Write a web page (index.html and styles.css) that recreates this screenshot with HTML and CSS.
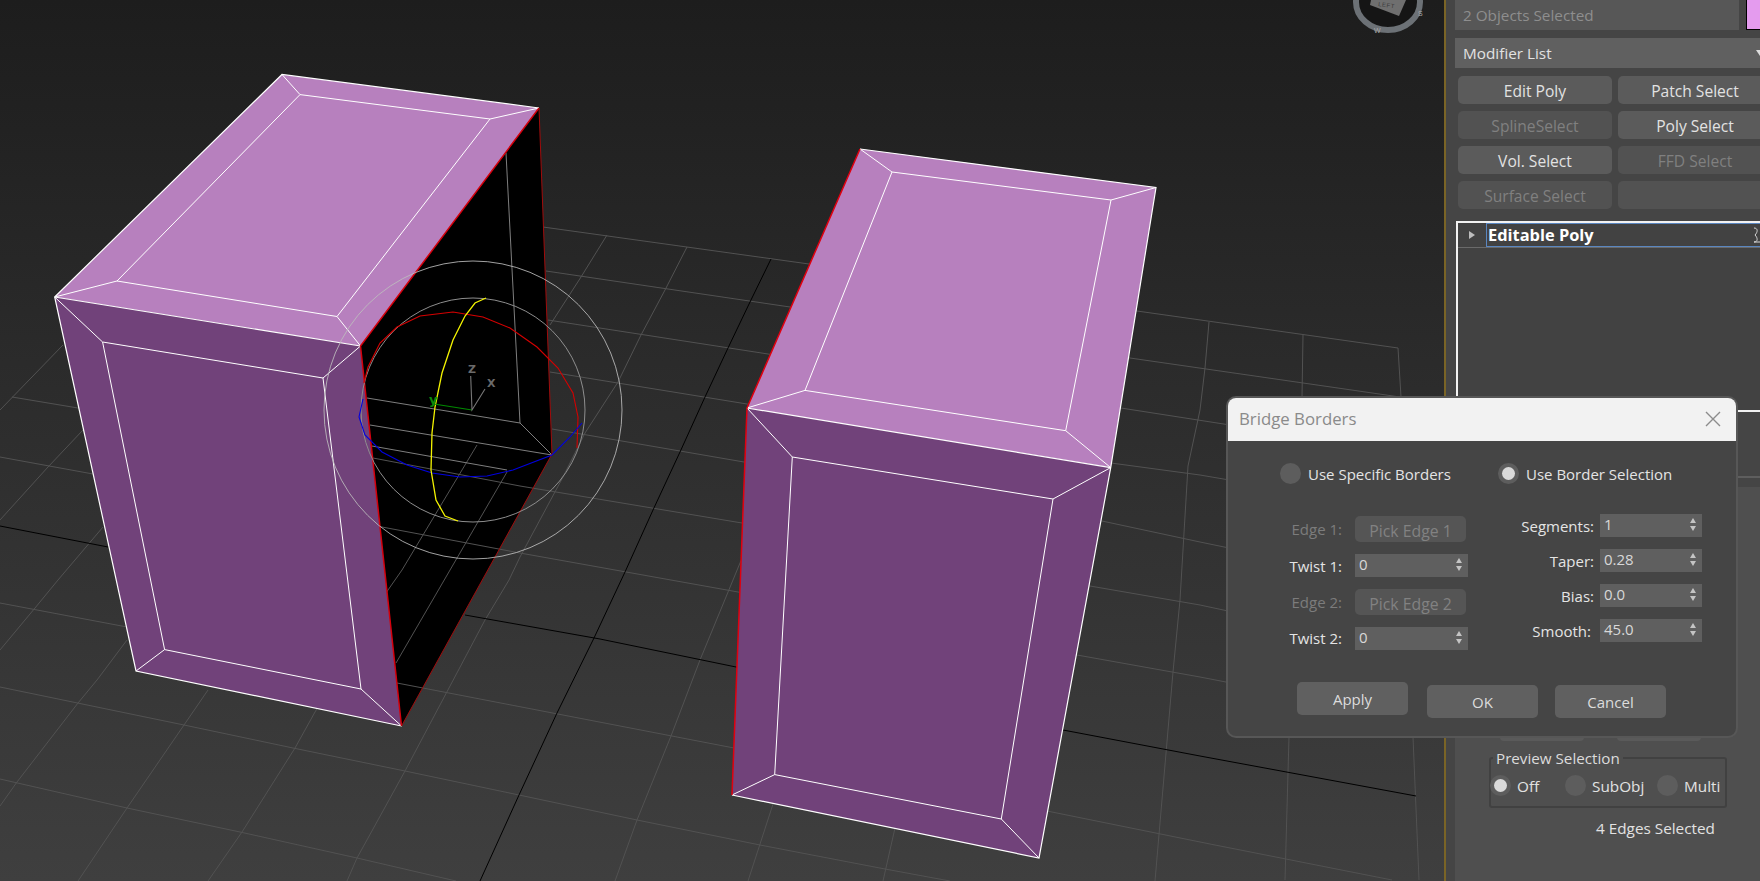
FILE: index.html
```html
<!DOCTYPE html>
<html lang="en">
<head>
<meta charset="utf-8">
<title>Bridge Borders</title>
<link rel="stylesheet" href="styles.css">
</head>
<body>
<div class="app">
  <main class="viewport">
    <svg class="scene" width="1444" height="881" viewBox="0 0 1444 881">
      <defs>
        <linearGradient id="bg" x1="0" y1="0" x2="0" y2="1">
          <stop offset="0" stop-color="#1d1d1d"/>
          <stop offset="1" stop-color="#3f3f3f"/>
        </linearGradient>
      </defs>
      <rect width="1444" height="881" fill="url(#bg)"/>

      <!-- view cube -->
      <ellipse class="vc-well" cx="1388" cy="2" rx="32" ry="28"/>
      <ellipse class="vc-ring" cx="1388" cy="2" rx="32" ry="28"/>
      <polygon class="vc-face" points="1371,0 1370,5 1399,16 1406,0"/>
      <text class="vc-label" x="1378" y="6" transform="rotate(8 1378 6)">LEFT</text>
      <text class="vc-mark" x="1418" y="16">S</text>
      <text class="vc-mark" x="1374" y="33">W</text>

      <!-- far side of the left box -->
      <polygon class="hole" points="539,108 552,454 401.5,726 360.5,346"/>

      <!-- grid -->
      <g class="grid">
        <polyline points="543,227 809,264 1137,311 1398,348"/>
        <polyline points="546,271 790,307 1130,358 1400,397"/>
        <polyline points="548,320 768,354 1121,408 1230,425 1405,453"/>
        <polyline points="550,372 747,404 1111,463 1200,475 1405,510"/>
        <polyline points="552,429 744,462 1102,521 1200,542 1408,585"/>
        <polyline points="12,397 78,408 373,458 520,486 742,523 1090,586 1200,605 1410,650"/>
        <polyline points="0,457 93,474 382,527 520,553 738,592 1077,655 1200,677 1412,718"/>
        <polyline points="0,603 127,627 397,683 734,748 1047,811 1210,844 1392,880"/>
        <polyline points="0,687 184,725 293,748 405,771 519,795 637,820 760,845 885,869 950,881"/>
        <polyline points="0,779 127,808 240,832 357,858 456,881"/>
        <polyline points="1398,348 1401,397 1405,500 1413,737 1419,880"/>
        <polyline points="1303,335 1302,397 1295,600 1289,737 1285,880"/>
        <polyline points="1209,322 1205,368 1200,410 1188,466 1180,600 1173,672 1155,881"/>
        <polyline points="905,800 895,828 883,881"/>
        <polyline points="800,740 774,801 748,881"/>
        <polyline points="760,520 740,563 700,660 671,736 637,820 615,881"/>
        <polyline points="687,247 665,290 641,335 618,382 585,433 563,477 520,557 509,580 485,620 405,771 357,858 347,881"/>
        <polyline points="607,235 581,277 550,325"/>
        <polyline points="477,445 402,570 388,590 315,712 295,748 242,832 208,881"/>
        <polyline points="507,472 396,663"/>
        <polyline points="208,690 184,725 127,808 78,881"/>
        <polyline points="127,640 97,680 78,703 17,782 0,806"/>
        <polyline points="103,527 58,580 35,608 0,650"/>
        <polyline points="83,430 48,467 0,520"/>
        <polyline points="63,345 0,410"/>
      </g>
      <g class="axis">
        <polyline points="771,259 750,302 728,348 705,397 680,452 653,510 625,572 594,638 557,713 519,795 480,881"/>
        <polyline points="0,526 108,547"/>
        <polyline points="465,615 600,639 736,667 1063,730 1200,756 1416,796"/>
      </g>

      <!-- wires seen through the hollow box -->
      <g class="inner">
        <polyline points="506,153 520,423 552,455"/>
        <polyline points="367,398 520,423"/>
        <polyline points="370,425 552,455"/>
        <polyline points="372,446 507,470"/>
      </g>

      <!-- left box -->
      <polygon class="top" points="282,74.5 539,108 360.5,346 54.7,297"/>
      <polygon class="front" points="54.7,297 360.5,346 401.5,726 136,671"/>
      <g class="wire">
        <polyline points="54.7,297 282,74.5 539,108"/>
        <polyline points="54.7,297 360.5,346"/>
        <polyline points="54.7,297 136,671 401.5,726"/>
      </g>
      <g class="wire thin">
        <polygon points="300,94.6 490,119 337,316.5 117,281"/>
        <line x1="282" y1="74.5" x2="300" y2="94.6"/>
        <line x1="539" y1="108" x2="490" y2="119"/>
        <line x1="360.5" y1="346" x2="337" y2="316.5"/>
        <line x1="54.7" y1="297" x2="117" y2="281"/>
        <polygon points="102.6,342 323,378 361,689 164.6,649.6"/>
        <line x1="54.7" y1="297" x2="102.6" y2="342"/>
        <line x1="360.5" y1="346" x2="323" y2="378"/>
        <line x1="401.5" y1="726" x2="361" y2="689"/>
        <line x1="136" y1="671" x2="164.6" y2="649.6"/>
      </g>
      <g class="border">
        <polyline points="539,108 360.5,346 401.5,726"/>
      </g>
      <polyline class="border dim" points="539,108 552,454 401.5,726"/>

      <!-- right box -->
      <polygon class="top" points="860,149 1156,187.5 1110.7,467.6 747,408"/>
      <polygon class="front" points="747,408 1110.7,467.6 1039,858 732,795"/>
      <g class="wire">
        <polyline points="860,149 1156,187.5 1110.7,467.6 1039,858 732,795"/>
        <polyline points="747,408 1110.7,467.6"/>
      </g>
      <g class="wire thin">
        <polygon points="892,172 1111,200 1065.7,430.7 805,390.4"/>
        <line x1="860" y1="149" x2="892" y2="172"/>
        <line x1="1156" y1="187.5" x2="1111" y2="200"/>
        <line x1="1110.7" y1="467.6" x2="1065.7" y2="430.7"/>
        <line x1="747" y1="408" x2="805" y2="390.4"/>
        <polygon points="792.3,457 1053,499 1001.3,819 774.7,774.6"/>
        <line x1="747" y1="408" x2="792.3" y2="457"/>
        <line x1="1110.7" y1="467.6" x2="1053" y2="499"/>
        <line x1="1039" y1="858" x2="1001.3" y2="819"/>
        <line x1="732" y1="795" x2="774.7" y2="774.6"/>
      </g>
      <polyline class="border" points="860,149 747,408 732,795"/>

      <!-- rotate gizmo -->
      <circle class="giz-outer" cx="473" cy="410" r="149"/>
      <circle class="giz-inner" cx="473" cy="410" r="112"/>
      <polyline class="giz red" points="364,383 368,367 380,343 397,327 420,316 453,312 483,317 510,328 537,347 558,368 573,393 578,417 577,448"/>
      <polyline class="giz blue" points="363,399 359,417 365,435 382,452 407,465 432,473 460,477 487,476 513,470 552,455 570,437 582,423"/>
      <polyline class="giz yellow" points="486,298 475,303 465,316 453,340 442,373 435,407 432,433 431,470 436,500 445,516 458,521"/>
      <line class="giz green" x1="434" y1="404" x2="472" y2="410"/>
      <polyline class="giz gray" points="470.7,376 472,410 485,389"/>
      <text class="giz-y" x="429" y="404">y</text>
      <text class="giz-l" x="468" y="373">Z</text>
      <text class="giz-l" x="487" y="387">X</text>
    </svg>
  </main>

  <aside class="panel">
    <div class="name-row">
      <div class="name-field">2 Objects Selected</div>
      <div class="swatch"></div>
    </div>
    <div class="mod-list"><span>Modifier List</span><span class="caret"></span></div>
    <div class="mod-buttons">
      <button class="pbtn">Edit Poly</button>
      <button class="pbtn">Patch Select</button>
      <button class="pbtn off">SplineSelect</button>
      <button class="pbtn">Poly Select</button>
      <button class="pbtn">Vol. Select</button>
      <button class="pbtn off">FFD Select</button>
      <button class="pbtn off">Surface Select</button>
      <button class="pbtn off"></button>
    </div>
    <div class="stack">
      <div class="stack-row">
        <span class="expander"></span>
        <span class="stack-name">Editable Poly</span>
        <svg class="pin" width="8" height="16" viewBox="0 0 8 16"><path d="M1 1c4 0 4 4 1 7c3 3 3 7-1 7h7"/></svg>
      </div>
    </div>
    <div class="stack-tools"></div>
    <section class="rollout">
      <div class="grip"></div>
      <div class="hidden-row">
        <button class="hbtn"></button>
        <button class="hbtn"></button>
      </div>
      <fieldset class="preview">
        <legend>Preview Selection</legend>
        <label class="popt opt-off"><span class="radio on"></span>Off</label>
        <label class="popt opt-sub"><span class="radio"></span>SubObj</label>
        <label class="popt"><span class="radio"></span>Multi</label>
      </fieldset>
      <div class="sel-count">4 Edges Selected</div>
    </section>
  </aside>

  <div class="dialog">
    <header class="dlg-title">
      <span>Bridge Borders</span>
      <svg class="dlg-close" width="16" height="16" viewBox="0 0 16 16"><path d="M1 1l14 14M15 1L1 15"/></svg>
    </header>
    <div class="dlg-body">
      <div class="mode-row">
        <label class="mode"><span class="radio"></span>Use Specific Borders</label>
        <label class="mode"><span class="radio on"></span>Use Border Selection</label>
      </div>
      <div class="form">
        <div class="col-left">
          <span class="lbl off">Edge 1:</span><button class="pick">Pick Edge 1</button>
          <span class="lbl">Twist 1:</span><div class="spinner wide">0<span class="spin"></span></div>
          <span class="lbl off">Edge 2:</span><button class="pick">Pick Edge 2</button>
          <span class="lbl nudge">Twist 2:</span><div class="spinner wide nudge">0<span class="spin"></span></div>
        </div>
        <div class="col-right">
          <span class="lbl">Segments:</span><div class="spinner">1<span class="spin"></span></div>
          <span class="lbl">Taper:</span><div class="spinner">0.28<span class="spin"></span></div>
          <span class="lbl">Bias:</span><div class="spinner">0.0<span class="spin"></span></div>
          <span class="lbl smooth">Smooth:</span><div class="spinner">45.0<span class="spin"></span></div>
        </div>
      </div>
      <div class="actions">
        <button class="act">Apply</button>
        <button class="act low ok">OK</button>
        <button class="act low">Cancel</button>
      </div>
    </div>
  </div>
</div>
</body>
</html>
```
FILE: styles.css
```css
* { box-sizing: border-box; }
html, body { margin: 0; height: 881px; overflow: hidden; background: #444; }
body, button { font-family: "Open Sans", "Noto Sans", sans-serif; font-size: 15px; }
button { border: 0; padding: 0; }

.app { position: relative; display: flex; width: 1760px; height: 881px; overflow: hidden; }
.viewport { flex: 0 0 1444px; height: 881px; }
.scene { display: block; }

/* scene */
.grid polyline { fill: none; stroke: #525252; stroke-width: 1; }
.axis polyline { fill: none; stroke: #000; stroke-width: 1; }
.inner polyline { fill: none; stroke: #7e7e7e; stroke-width: 1; }
.hole { fill: #000; }
.top { fill: #b780be; }
.front { fill: #71427a; }
.wire polyline, .wire polygon, .wire line { fill: none; stroke: #fff; stroke-width: 1.2; }
.wire.thin polyline, .wire.thin polygon, .wire.thin line { stroke-width: 1; }
.border { fill: none; stroke: #e0000f; stroke-width: 1.5; }
.border polyline { fill: none; stroke: #d4000c; stroke-width: 1.5; }
.border.dim { stroke: #a00c0c; stroke-width: 1; }
.giz-outer { fill: none; stroke: #bdbdbd; stroke-width: 1; opacity: .85; }
.giz-inner { fill: none; stroke: #8e8e8e; stroke-width: 1; }
.giz { fill: none; stroke-width: 1.1; }
.red { stroke: #d50000; }
.blue { stroke: #0000e0; }
.yellow { stroke: #f4f400; stroke-width: 1.3; }
.green { stroke: #008a00; }
.gray { stroke: #777; }
.giz-y { fill: #0b8a0b; font: bold 13px "DejaVu Sans", sans-serif; }
.giz-l { fill: #6a6a6a; font: bold 11px "DejaVu Sans", sans-serif; }
.vc-well { fill: #151515; }
.vc-ring { fill: none; stroke: #6c7176; stroke-width: 6; }
.vc-face { fill: #6f6f6f; }
.vc-label { fill: #3a3a3a; font: 6px "Liberation Sans", sans-serif; letter-spacing: .5px; }
.vc-mark { fill: #a8a8a8; font: 7px "Liberation Sans", sans-serif; }

/* command panel */
.panel { flex: 0 0 316px; height: 881px; background: #454545; border-left: 2px solid #7a6426; padding-left: 9px; overflow: hidden; color: #e2e2e2; }
.name-row { display: flex; height: 30px; gap: 7px; }
.name-field { flex: none; width: 284px; height: 30px; background: #575757; color: #8e8e8e; padding: 0 0 0 8px; line-height: 30px; font-size: 15.3px; }
.swatch { flex: none; width: 14px; height: 30px; background: #e49bee; border: 1px solid #000; border-top: 0; border-right: 0; }
.mod-list { display: flex; justify-content: space-between; align-items: center; width: 305px; height: 30px; margin-top: 8px; background: #606060; padding: 0 0 0 8px; font-size: 15.3px; }
.caret { width: 0; height: 0; border: 4px solid transparent; border-top: 6px solid #ddd; border-bottom: 0; margin-right: -4px; }
.mod-buttons { display: grid; grid-template-columns: 154px 154px; grid-auto-rows: 28px; column-gap: 6px; row-gap: 7px; margin: 8px 0 0 3px; }
.pbtn { background: #5b5b5b; border-radius: 5px; color: #e2e2e2; font-size: 15.6px; padding-top: 2px; }
.pbtn.off { background: #525252; color: #808080; }
.stack { width: 330px; height: 191px; margin: 12px 0 0 1px; border: 2px solid #f2f2f2; border-right: 0; background: #424242; }
.stack-row { position: relative; display: flex; align-items: center; height: 25px; border-bottom: 1px solid #6a6a6a; }
.expander { width: 0; height: 0; margin-left: 11px; border: 4px solid transparent; border-left: 6px solid #bdbdbd; border-right: 0; }
.stack-name { display: block; margin-left: 11px; width: 290px; height: 24px; padding-left: 1px; line-height: 22px; border: 1px solid #5a86c0; border-right: 0; font-weight: 700; font-size: 16.4px; color: #fff; }
.pin { position: absolute; left: 295px; top: 4px; fill: none; stroke: #d8d8d8; stroke-width: 1; }
.stack-tools { width: 330px; height: 66px; margin-left: 1px; border-bottom: 2px solid #5e5e5e; }
.rollout { position: relative; width: 320px; height: 403px; margin-top: 9px; background: #4f4f4f; border-radius: 3px; overflow: hidden; }
.grip { position: absolute; left: 287px; top: 10px; width: 10px; height: 10px; background-image: radial-gradient(#8a8a8a 40%, transparent 45%); background-size: 2px 2px; }
.hidden-row { display: flex; gap: 33px; margin: 226px 0 0 45px; }
.hbtn { width: 84px; height: 28px; background: #5a5a5a; border-radius: 4px; }
.preview { position: relative; width: 238px; height: 59px; margin: 8px 0 0 34px; padding: 0 0 2px; border: 2px solid #414141; border-radius: 3px; display: flex; align-items: center; }
.preview legend { margin-left: 2px; padding: 0 3px; font-size: 15.2px; line-height: 18px; color: #dcdcdc; }
.popt { display: flex; align-items: center; gap: 6px; font-size: 15.3px; }
.opt-off { margin-left: -1px; width: 75px; }
.opt-sub { width: 92px; }
.sel-count { margin: 10px 0 0 141px; font-size: 15.3px; line-height: 20px; }

.radio { position: relative; display: inline-block; flex: none; width: 21px; height: 21px; border-radius: 50%; background: #5d5d5d; }
.radio.on::after { content: ""; position: absolute; left: 4px; top: 4px; width: 13px; height: 13px; border-radius: 50%; background: #d9d9d9; }

/* dialog */
.dialog { position: absolute; left: 1226px; top: 396px; width: 512px; height: 342px; border: 2px solid #575757; border-radius: 10px; background: #454545; overflow: hidden; color: #e4e4e4; }
.dlg-title { display: flex; align-items: center; justify-content: space-between; height: 43px; padding: 0 15px 2px 11px; background: #f2f2f2; color: #8a8a8a; font-size: 16.8px; }
.dlg-close { fill: none; stroke: #8c8c8c; stroke-width: 1.4; }
.mode-row { display: grid; grid-template-columns: 218px 200px; margin: 22px 0 0 52px; }
.mode { display: flex; align-items: center; gap: 7px; height: 21px; }
.form { display: flex; gap: 26px; margin: 30px 0 0 40px; }
.col-left { display: grid; grid-template-columns: 74px 113px; grid-template-rows: 26px 23px 26px 23px; column-gap: 13px; row-gap: 12px; margin-top: 2px; align-items: center; }
.col-right { display: grid; grid-template-columns: 100px 102px; grid-auto-rows: 23px; column-gap: 6px; row-gap: 12px; align-items: center; }
.lbl { text-align: right; white-space: nowrap; }
.lbl.off { color: #7c7c7c; }
.lbl.smooth { padding-right: 3px; }
.nudge { margin-top: -1px; }
.pick { width: 111px; height: 26px; background: #555; border-radius: 5px; color: #828282; font-size: 15.8px; padding-top: 3px; }
.spinner { position: relative; height: 23px; background: #5f5f5f; color: #d8d8d8; padding-left: 4px; line-height: 21px; }
.spin { position: absolute; right: 6px; top: 4px; display: flex; flex-direction: column; gap: 3px; }
.spin::before, .spin::after { content: ""; width: 0; height: 0; border: 3.5px solid transparent; }
.spin::before { border-bottom: 5px solid #c4c4c4; border-top: 0; }
.spin::after { border-top: 5px solid #c4c4c4; border-bottom: 0; }
.actions { display: flex; align-items: flex-start; gap: 17px; margin: 32px 0 0 69px; }
.act { width: 111px; height: 33px; background: #606060; border-radius: 5px; color: #dcdcdc; }
.act.low { margin-top: 3px; }
.act.ok { margin-left: 2px; }
```
